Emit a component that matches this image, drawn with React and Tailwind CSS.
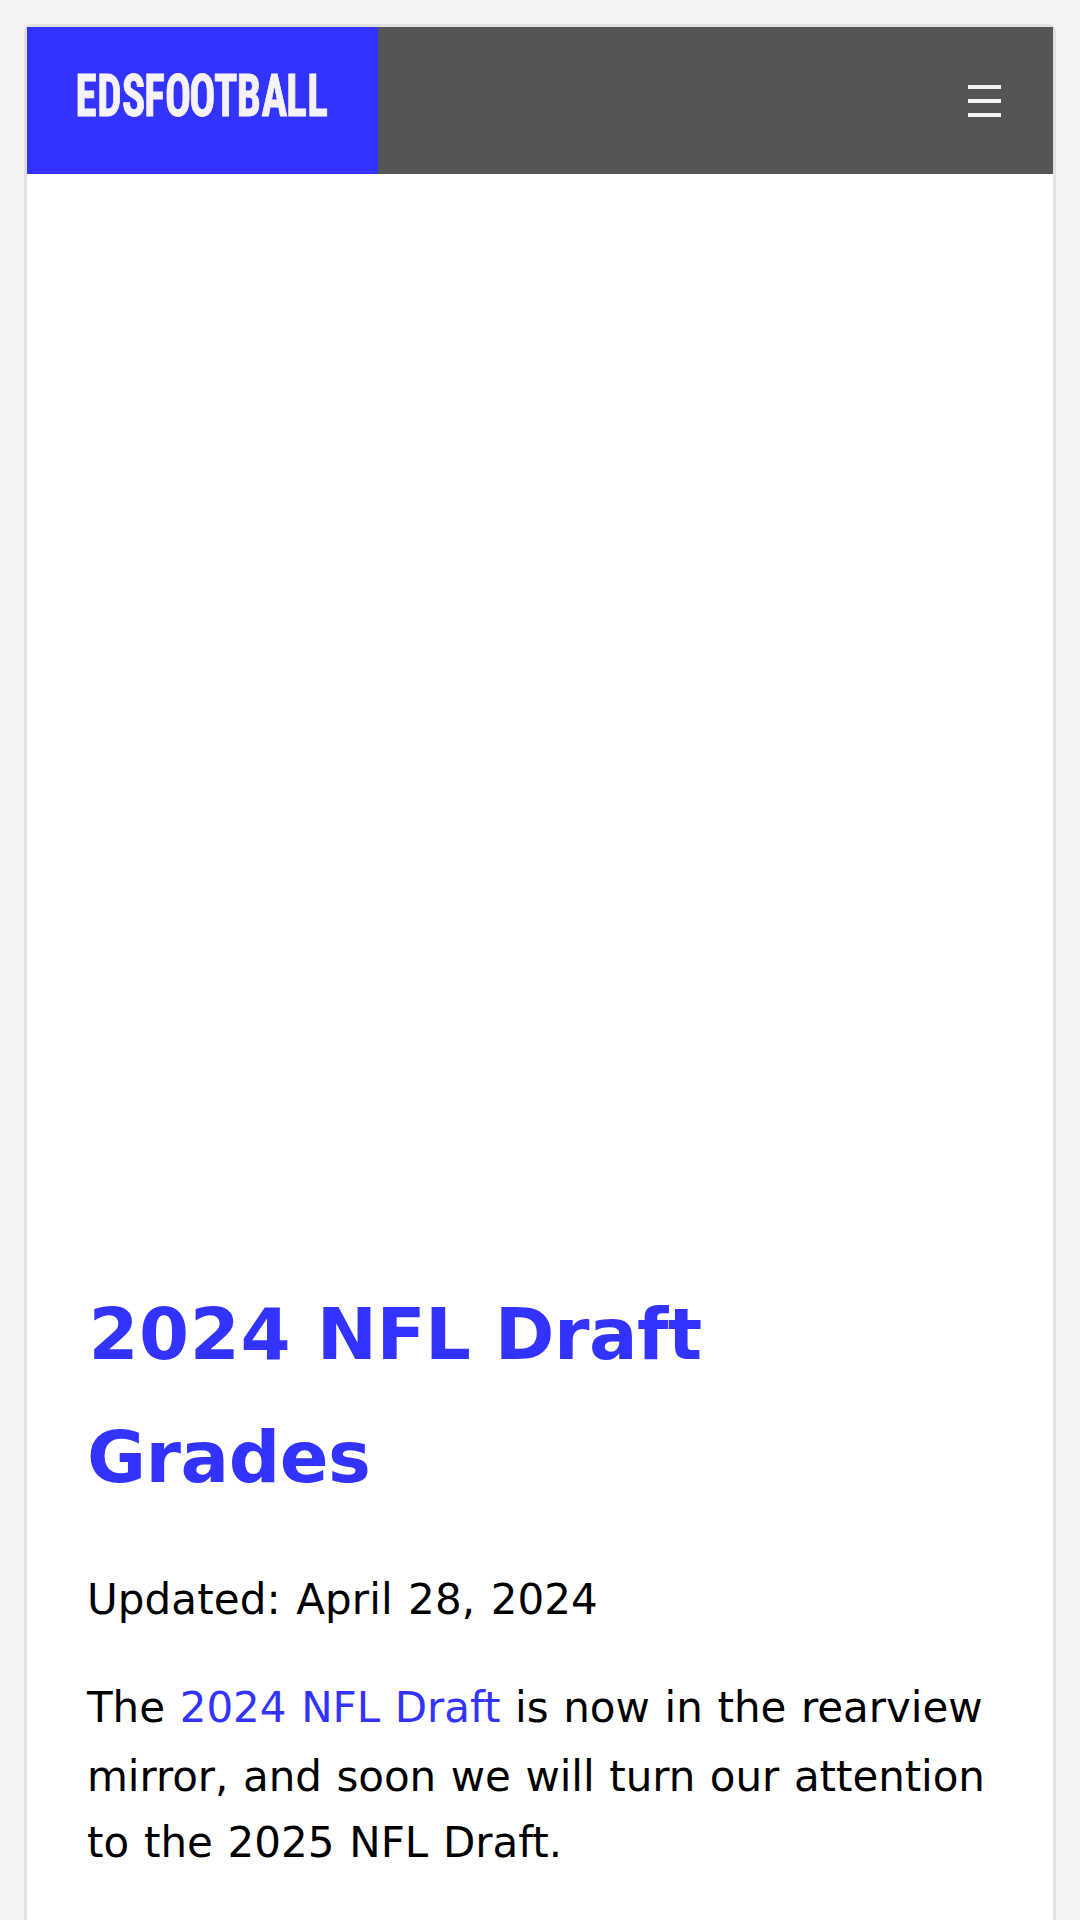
import React from "react";

// x position of each letter, in the squeezed text space (x / 0.73)
const LOGO_X = "66.4 96.4 130.1 160.7 189.0 222.4 256.2 287.3 321.4 355.0 384.0";

const Logo = () => (
  <a href="#" className="block h-[147px] w-[351px] bg-[#3333ff]">
    <svg viewBox="0 0 351 147" width="351" height="147" role="img" aria-label="EDSFOOTBALL">
      <text
        transform="scale(0.73 1)"
        x={LOGO_X}
        y="89"
        fill="#f5f2fa"
        stroke="#f5f2fa"
        strokeWidth="0.9"
        className="font-[Roboto,sans-serif] text-[59.2px] font-bold font-stretch-condensed"
      >
        EDSFOOTBALL
      </text>
    </svg>
  </a>
);

const MenuButton = () => (
  <button className="mr-[52px] flex flex-col gap-[10px] pt-px" aria-label="Menu">
    <span className="block h-[4px] w-[33px] bg-[#f5f2f2]" />
    <span className="block h-[4px] w-[33px] bg-[#f5f2f2]" />
    <span className="block h-[4px] w-[33px] bg-[#f5f2f2]" />
  </button>
);

const App = () => {
  return (
    <div className="h-[1920px] overflow-hidden bg-[#f4f4f4] px-6 pt-6 font-['DejaVu_Sans',Verdana,sans-serif] text-black">
      <div className="h-[1920px] rounded-t-[8px] border-[3px] border-[#e0e0e0] bg-white">
        <header className="flex h-[147px] items-center justify-between bg-[#555555]">
          <Logo />
          <MenuButton />
        </header>

        {/* ad slot */}
        <div className="h-[1099px]" />

        <main className="px-[60px]">
          <h1 className="text-[72px] leading-[123px] font-bold text-[#3333ff]">
            <span className="block pl-[1.4px]">
              <span className="tracking-[0.6px]">2024 </span>
              <span className="tracking-[-0.6px]">NFL Draft</span>
            </span>
            <span className="block tracking-[-0.5px]">Grades</span>
          </h1>
          <p className="mt-[47px] text-[42px] leading-[67px] tracking-[0.1px] [word-spacing:2px]">
            Updated: April 28, 2024
          </p>
          <p className="mt-[41px] text-[42px] leading-[67px] whitespace-nowrap [word-spacing:1.4px]">
            <span className="block h-[69px] tracking-[-0.04px]">
              The <a href="#" className="text-[#3333ff]">2024 NFL Draft</a> is now in the rearview
            </span>
            <span className="block h-[66px] tracking-[-0.07px]">mirror, and soon we will turn our attention</span>
            <span className="block">to the 2025 NFL Draft.</span>
          </p>
        </main>
      </div>
    </div>
  );
};

export default App;
